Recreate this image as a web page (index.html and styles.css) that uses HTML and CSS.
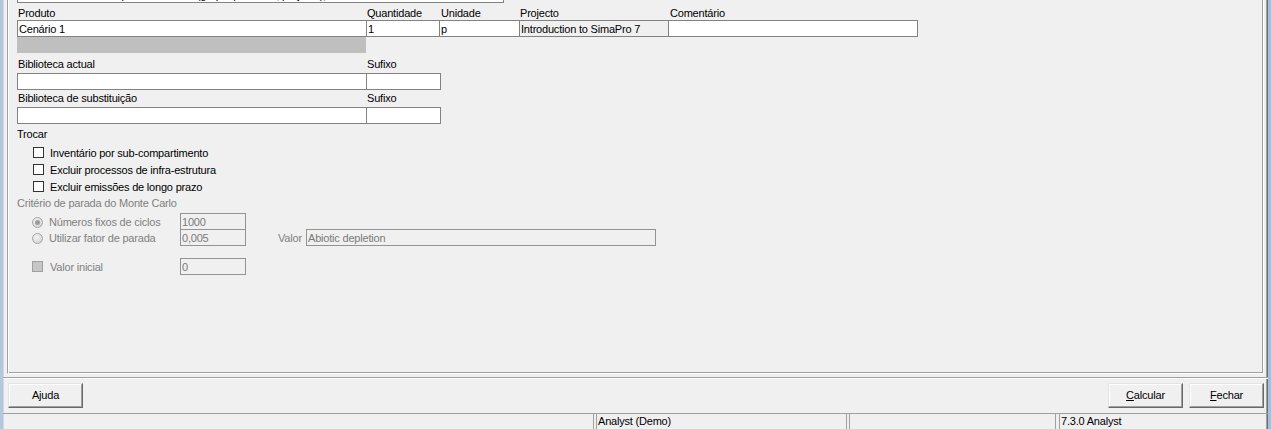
FILE: index.html
```html
<!DOCTYPE html>
<html lang="pt">
<head>
<meta charset="utf-8">
<title>Calcular</title>
<link rel="stylesheet" href="styles.css">
</head>
<body>
<div class="window">
  <div class="panel">
    <div class="topbox"><div class="topbox-text">Cálculo de inventário para: Cenário 1 (grupo: processo, projecto)<span class="hl">p</span></div></div>

    <div class="row lbl-row">
      <div class="lbl w-prod">Produto</div>
      <div class="lbl w-qty">Quantidade</div>
      <div class="lbl w-unit pad2">Unidade</div>
      <div class="lbl w-proj">Projecto</div>
      <div class="lbl w-com pad2">Comentário</div>
    </div>
    <div class="row">
      <div class="field w-prod">Cenário 1</div>
      <div class="field w-qty">1</div>
      <div class="field w-unit">p</div>
      <div class="field w-proj readonly">Introduction to SimaPro 7</div>
      <div class="field w-com last"></div>
    </div>
    <div class="graybar"></div>

    <div class="row lbl-row lib1">
      <div class="lbl w-prod">Biblioteca actual</div>
      <div class="lbl w-suf">Sufixo</div>
    </div>
    <div class="row field-row">
      <div class="field w-prod"></div>
      <div class="field w-suf last"></div>
    </div>

    <div class="row lbl-row lib2">
      <div class="lbl w-prod">Biblioteca de substituição</div>
      <div class="lbl w-suf">Sufixo</div>
    </div>
    <div class="row field-row">
      <div class="field w-prod"></div>
      <div class="field w-suf last"></div>
    </div>

    <div class="section-lbl">Trocar</div>
    <div class="cb-list">
      <div class="cb-row"><span class="cb"></span><span>Inventário por sub-compartimento</span></div>
      <div class="cb-row"><span class="cb"></span><span>Excluir processos de infra-estrutura</span></div>
      <div class="cb-row"><span class="cb"></span><span>Excluir emissões de longo prazo</span></div>
    </div>

    <div class="mc-lbl">Critério de parada do Monte Carlo</div>
    <div class="mc-row mc-row1">
      <div class="mc-left"><span class="radio checked"></span><span class="mc-text">Números fixos de ciclos</span></div>
      <div class="dfield w-small">1000</div>
    </div>
    <div class="mc-row mc-row2">
      <div class="mc-left"><span class="radio"></span><span class="mc-text">Utilizar fator de parada</span></div>
      <div class="dfield w-small">0,005</div>
      <div class="valor-lbl">Valor</div>
      <div class="dfield w-wide">Abiotic depletion</div>
    </div>
    <div class="mc-row mc-row3">
      <div class="mc-left"><span class="cb-dis"></span><span class="mc-text">Valor inicial</span></div>
      <div class="dfield w-small">0</div>
    </div>
  </div>

  <div class="sep"></div>

  <div class="buttons">
    <div class="btn">A<u>j</u>uda</div>
    <div class="spacer"></div>
    <div class="btn"><u>C</u>alcular</div>
    <div class="btn btn-gap"><u>F</u>echar</div>
  </div>

  <div class="status">
    <div class="sp sp1"></div>
    <div class="sp sp2">Analyst (Demo)</div>
    <div class="sp sp3"></div>
    <div class="sp sp4">7.3.0 Analyst</div>
  </div>
</div>
</body>
</html>
```
FILE: styles.css
```css
html, body {
  margin: 0;
  padding: 0;
  background: #f0f0f0;
}
body {
  font-family: "Liberation Sans", Arial, sans-serif;
  font-size: 11px;
  letter-spacing: -0.2px;
  color: #000;
  overflow: hidden;
}
.window {
  width: 1271px;
  height: 429px;
  box-sizing: border-box;
  border-left: 3px solid #b3c8de;
  border-right: 3px solid #a6c0dc;
  box-shadow: inset -1px 0 0 #6e6e6e, inset -2px 0 0 #a0a0a0, inset 1px 0 0 #d6d6d6;
  display: flex;
  flex-direction: column;
  overflow: hidden;
}
.panel {
  flex-shrink: 0;
  height: 374px;
  margin: 0 4px;
  box-sizing: border-box;
  border-left: 1px solid #a0a0a0;
  border-right: 1px solid #fff;
  border-bottom: 1px solid #fff;
  box-shadow: inset 1px 0 0 #fff, inset -1px 0 0 #a0a0a0, inset 0 -1px 0 #a0a0a0;
  padding-left: 9px;
}
.topbox {
  width: 487px;
  height: 3px;
  box-sizing: border-box;
  border: 1px solid #828282;
  border-top: none;
  background: #fff;
  overflow: hidden;
}
.topbox-text {
  margin-top: -11px;
  line-height: 13px;
  white-space: nowrap;
  padding-left: 2px;
}
.hl { color: #e08a1e; }

.row { display: flex; }
.lbl-row {
  margin-top: 4px;
  height: 13px;
  line-height: 13px;
}
.lbl {
  box-sizing: border-box;
  padding-left: 1px;
  white-space: nowrap;
}
.pad2 { padding-left: 2px; }
.w-prod { width: 349px; }
.w-qty { width: 73px; }
.w-unit { width: 80px; }
.w-proj { width: 149px; }
.w-com { width: 250px; }
.w-suf { width: 75px; }

.field {
  height: 17px;
  box-sizing: border-box;
  border: 1px solid #828282;
  border-right: none;
  background: #fff;
  line-height: 15px;
  padding: 1px 0 0 1px;
  white-space: nowrap;
  overflow: hidden;
}
.field.last { border-right: 1px solid #828282; }
.field.readonly { background: #f0f0f0; }

.graybar {
  width: 349px;
  height: 16px;
  background: #bfbfbf;
}
.lib1 { margin-top: 5px; }
.lib2 { margin-top: 2px; }
.field-row { margin-top: 2px; }

.section-lbl {
  margin-top: 4px;
  height: 13px;
  line-height: 13px;
}
.cb-list { margin-top: 4px; }
.cb-row {
  display: flex;
  height: 17px;
  line-height: 17px;
  white-space: nowrap;
}
.cb {
  width: 11px;
  height: 11px;
  box-sizing: border-box;
  border: 1px solid #333;
  background: #fff;
  margin: 2px 6px 0 16px;
  flex-shrink: 0;
}

.mc-lbl {
  margin-top: 1px;
  height: 13px;
  line-height: 13px;
  color: #808080;
}
.mc-row {
  display: flex;
  height: 17px;
  color: #808080;
}
.mc-row1 { margin-top: 3px; }
.mc-row2 { margin-top: -1px; }
.mc-row3 { margin-top: 12px; }
.mc-left {
  width: 163px;
  display: flex;
  align-items: flex-start;
  line-height: 17px;
  white-space: nowrap;
}
.mc-text { padding-top: 1px; }
.radio {
  position: relative;
  width: 11px;
  height: 11px;
  box-sizing: border-box;
  border-radius: 50%;
  border: 1px solid #a6a6a6;
  background: radial-gradient(circle at 40% 35%, #f4f4f4 0%, #d9d9d9 70%, #c8c8c8 100%);
  margin: 4px 6px 0 15px;
  flex-shrink: 0;
}
.radio.checked::after {
  content: "";
  position: absolute;
  left: 2px;
  top: 2px;
  width: 5px;
  height: 5px;
  border-radius: 50%;
  background: #9c9c9c;
}
.cb-dis {
  width: 11px;
  height: 11px;
  box-sizing: border-box;
  border: 1px solid #a0a0a0;
  background: #c6c6c6;
  margin: 3px 7px 0 15px;
  flex-shrink: 0;
}
.dfield {
  height: 17px;
  box-sizing: border-box;
  border: 1px solid #939393;
  line-height: 15px;
  padding: 1px 0 0 1px;
  color: #7a7a7a;
  white-space: nowrap;
  overflow: hidden;
}
.w-small { width: 66px; }
.w-wide { width: 350px; }
.valor-lbl {
  margin-left: 32px;
  width: 28px;
  line-height: 17px;
  padding-top: 1px;
}

.sep {
  flex-shrink: 0;
  margin-top: 3px;
  height: 2px;
  box-sizing: border-box;
  border-top: 1px solid #a0a0a0;
  border-bottom: 1px solid #fff;
}
.buttons {
  flex-shrink: 0;
  height: 34px;
  box-sizing: border-box;
  display: flex;
  align-items: flex-start;
  padding: 4px 4px 0 5px;
}
.btn {
  width: 75px;
  height: 25px;
  box-sizing: border-box;
  border: 1px solid;
  border-color: #e3e3e3 #696969 #696969 #e3e3e3;
  box-shadow: inset -1px -1px 0 #a0a0a0, inset 1px 1px 0 #fff;
  background: #f0f0f0;
  display: flex;
  align-items: center;
  justify-content: center;
  line-height: 13px;
}
.spacer { flex: 1; }
.btn-gap { margin-left: 6px; }

.status {
  flex-shrink: 0;
  height: 16px;
  box-sizing: border-box;
  border-top: 1px solid #a0a0a0;
  display: flex;
}
.sp {
  height: 15px;
  box-sizing: border-box;
  line-height: 15px;
  padding-left: 1px;
  white-space: nowrap;
}
.sp1 { width: 591px; border-right: 1px solid #a0a0a0; }
.sp2 { width: 251px; margin-left: 2px; border-left: 1px solid #a0a0a0; border-right: 1px solid #a0a0a0; }
.sp3 { width: 207px; margin-left: 2px; border-left: 1px solid #a0a0a0; border-right: 1px solid #a0a0a0; }
.sp4 { flex: 1; margin-left: 3px; border-left: 1px solid #a0a0a0; }
```
